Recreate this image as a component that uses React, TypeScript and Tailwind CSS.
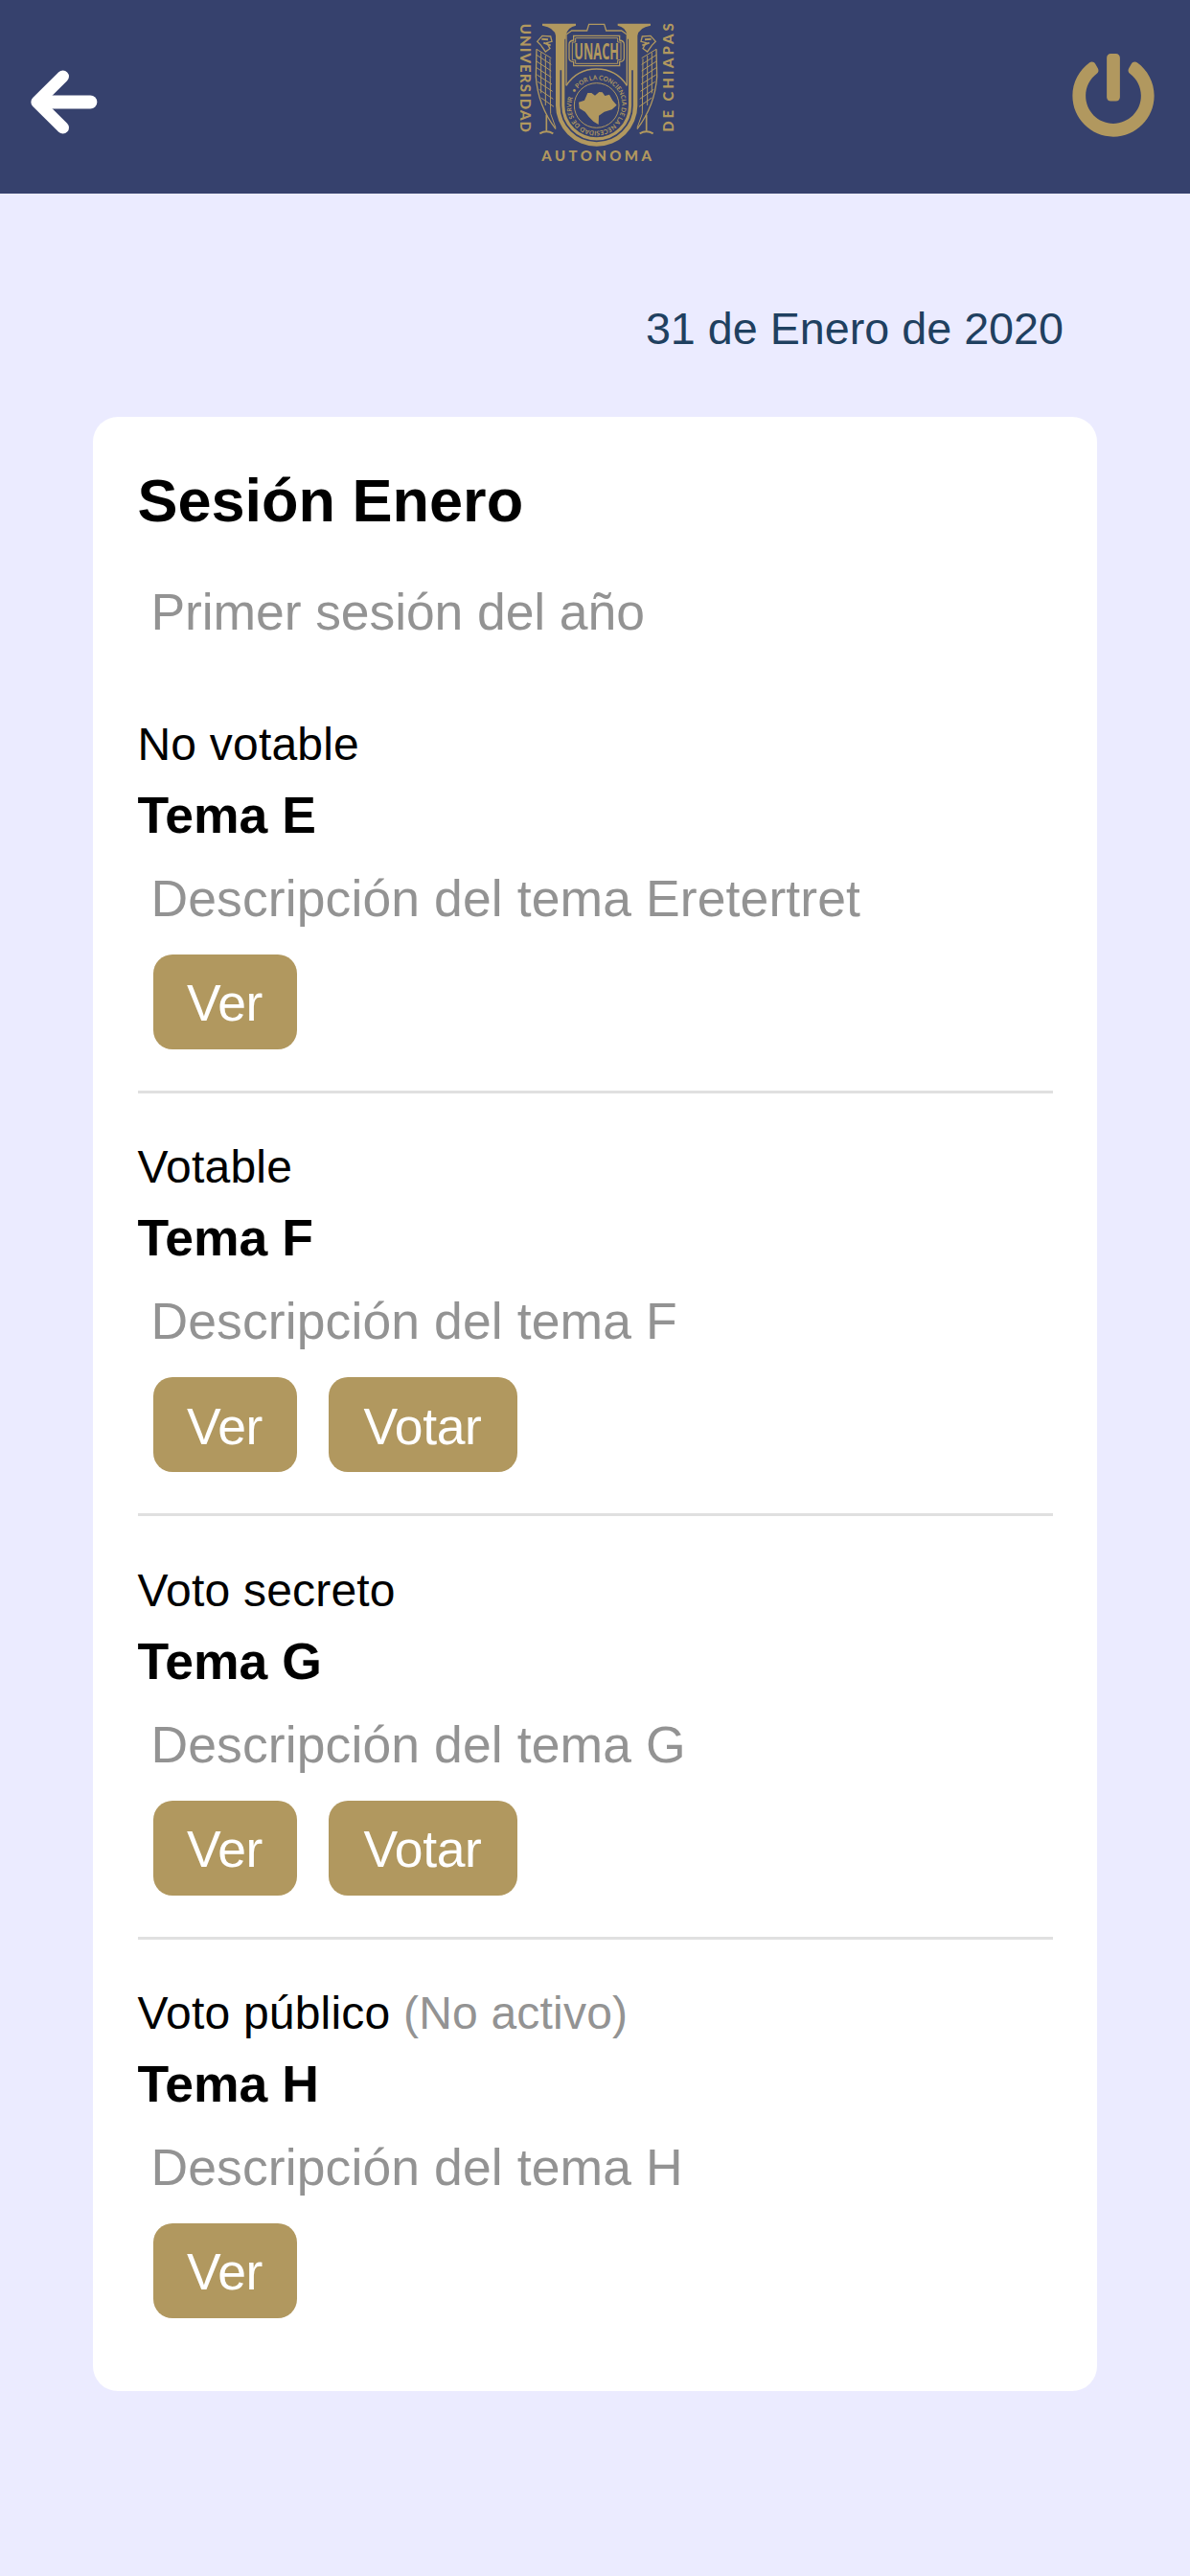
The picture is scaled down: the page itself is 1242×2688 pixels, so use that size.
import React from 'react';
import { FaPowerOff } from 'react-icons/fa';

type Tema = {
  tipo: string;
  nombre: string;
  descripcion: string;
  votable: boolean;
  inactivo?: boolean;
};

const temas: Tema[] = [
  { tipo: 'No votable', nombre: 'Tema E', descripcion: 'Descripción del tema Eretertret', votable: false },
  { tipo: 'Votable', nombre: 'Tema F', descripcion: 'Descripción del tema F', votable: true },
  { tipo: 'Voto secreto', nombre: 'Tema G', descripcion: 'Descripción del tema G', votable: true },
  { tipo: 'Voto público', nombre: 'Tema H', descripcion: 'Descripción del tema H', votable: false, inactivo: true },
];

const BackArrow: React.FC = () => (
  <svg viewBox="0 0 210 200" className="block h-[67px] w-[70px]" fill="none" stroke="white" strokeLinecap="round" strokeLinejoin="round">
    <path d="M101 20 L20 100 L101 180" strokeWidth="38" />
    <path d="M30 100 H187" strokeWidth="42" />
  </svg>
);

// alas y cabeza de los jaguares, se reflejan al otro lado del escudo
const Ala: React.FC = () => (
  <g fill="none" stroke="#b1985f" strokeWidth="4">
    <path d="M92 100 L108 82 L134 84 L138 100 L122 104 L132 122 L118 132 L104 112 Z" />
    <path d="M106 92 L126 94 M112 104 L134 112" strokeWidth="6" />
    <path d="M90 124 L88 210 Q94 300 150 374" />
    <path d="M90 124 L136 152 M90 142 L136 172 M90 162 L136 192 M90 182 L136 212 M91 204 L138 234 M94 226 L140 256 M98 250 L142 280 M104 276 L144 304" strokeWidth="3" />
    <path d="M104 134 V262 M118 144 V300 M132 154 L134 326 L150 370" strokeWidth="3" />
    <path d="M121 330 V380" strokeWidth="5" />
    <path d="M100 388 Q121 376 142 388" strokeWidth="6" />
  </g>
);

const Escudo: React.FC = () => (
  <svg viewBox="-12 0 570 510" className="block h-[170px] w-[190px]" fill="#b1985f" fontFamily="Lato, 'Open Sans', sans-serif">
    <text transform="translate(38 44) rotate(90)" fontSize="45" fontWeight="900" textLength="340">UNIVERSIDAD</text>
    <text transform="translate(518 383) rotate(-90)" fontSize="45" fontWeight="900" textLength="340">DE CHIAPAS</text>
    <text x="106" y="473" fontSize="45" fontWeight="900" textLength="344">AUTONOMA</text>

    <Ala />
    <g transform="matrix(-1 0 0 1 555 0)"><Ala /></g>

    {/* U */}
    <path d="M108 44 H213 V50 Q188 54 182 80 V300 A96 96 0 0 0 374 300 V80 Q368 54 344 50 V44 H447 V50 Q410 56 406 82 V300 A128 128 0 0 1 150 300 V82 Q146 56 108 50 Z" />
    <path d="M166 190 V300 A112 112 0 0 0 390 300 V190" fill="none" stroke="#36416d" strokeWidth="5" />
    <path d="M178 92 V300 A100 100 0 0 0 378 300 V92 Z" fill="#36416d" />

    {/* marco superior */}
    <g fill="none" stroke="#b1985f" strokeWidth="4">
      <path d="M183 238 V78 L200 66 H248 L254 46 H302 L308 66 H356 L373 78 V238" />
      <path d="M183 238 Q216 186 278 186 Q340 186 373 238" />
      <path d="M206 82 H350 V96 Q364 98 364 108 V152 Q364 162 350 164 V176 H206 V164 Q192 162 192 152 V108 Q192 98 206 96 Z" />
      <path d="M212 89 H344 V102 H354 V158 H344 V169 H212 V158 H202 V102 H212 Z" strokeWidth="3" />
      <circle cx="278" cy="300" r="70" strokeWidth="3" />
    </g>
    <text
      transform="translate(208 155) scale(0.68 1)"
      fontSize="72"
      fontWeight="700"
      textLength="206"
      lengthAdjust="spacingAndGlyphs"
      fontFamily="'Open Sans', sans-serif"
    >
      UNACH
    </text>

    {/* lema alrededor del mapa */}
    <path id="lema" d="M210.500 261 A78 78 0 1 1 345.500 339 A78 78 0 1 1 210.500 261" fill="none" />
    <text fontSize="20" fontWeight="700">
      <textPath href="#lema" textLength="484" lengthAdjust="spacingAndGlyphs">• POR LA CONCIENCIA DE LA NECESIDAD DE SERVIR</textPath>
    </text>

    {/* mapa de Chiapas */}
    <path d="M222 290 L240 284 L250 261 L262 261 L273 269 L286 258 L296 259 L304 270 L318 266 L328 284 L341 299 L326 313 L302 320 L285 332 L284 360 L268 350 L254 336 L242 320 L224 309 Z" />
  </svg>
);

const Boton: React.FC<{ children: React.ReactNode; ancho: string }> = ({ children, ancho }) => (
  <button className={`${ancho} h-[99px] rounded-[20px] bg-[#b1985f] pt-[3px] text-center text-[53.5px] leading-none tracking-[-0.4px] text-white`}>
    {children}
  </button>
);

const App: React.FC = () => {
  return (
    <div className="min-h-[2688px] w-[1242px] bg-[#ebebff] font-['Liberation_Sans',Arial,sans-serif] text-black">
      <header className="grid h-[202px] grid-cols-3 items-start bg-[#36416d]">
        <button className="justify-self-start pt-[73px] pl-8" aria-label="Regresar">
          <BackArrow />
        </button>
        <div className="justify-self-center pt-[10px]">
          <Escudo />
        </div>
        <button className="justify-self-end pt-14 pr-9 text-[#b1985f]" aria-label="Salir">
          <FaPowerOff size={88} />
        </button>
      </header>

      <p className="pt-[113px] pr-[132px] text-right text-[46.7px] leading-[56px] text-[#1f4060]">31 de Enero de 2020</p>

      <main className="mx-[97px] mt-[63.5px] h-[2060.5px] rounded-[26px] bg-white px-[46.5px] pt-[49px]">
        <h1 className="text-[63px] leading-[76px] font-bold">Sesión Enero</h1>
        <p className="mt-[47px] pl-3.5 text-[53.5px] leading-[64px] tracking-[-0.1px] text-[#939393]">Primer sesión del año</p>

        <ul className="mt-[78.5px]">
          {temas.map((tema, i) => (
            <li key={tema.nombre} className="h-[441.4px]">
              <p className="text-[48px] leading-[56px] tracking-[0.2px]">
                {tema.tipo}
                {tema.inactivo && <span className="text-[#939393]"> (No activo)</span>}
              </p>
              <h2 className="mt-[15px] text-[53.5px] leading-[62px] font-bold">{tema.nombre}</h2>
              <p className="mt-6 pl-3.5 text-[53.5px] leading-[64px] tracking-[0.1px] text-[#939393]">{tema.descripcion}</p>
              <div className="mt-[26px] flex gap-[33px] pl-4">
                <Boton ancho="w-[150px]">Ver</Boton>
                {tema.votable && <Boton ancho="w-[197px]">Votar</Boton>}
              </div>
              {i < temas.length - 1 && <hr className="mt-[43px] border-t-[3px] border-[#e0e0e0]" />}
            </li>
          ))}
        </ul>
      </main>
    </div>
  );
};

export default App;
